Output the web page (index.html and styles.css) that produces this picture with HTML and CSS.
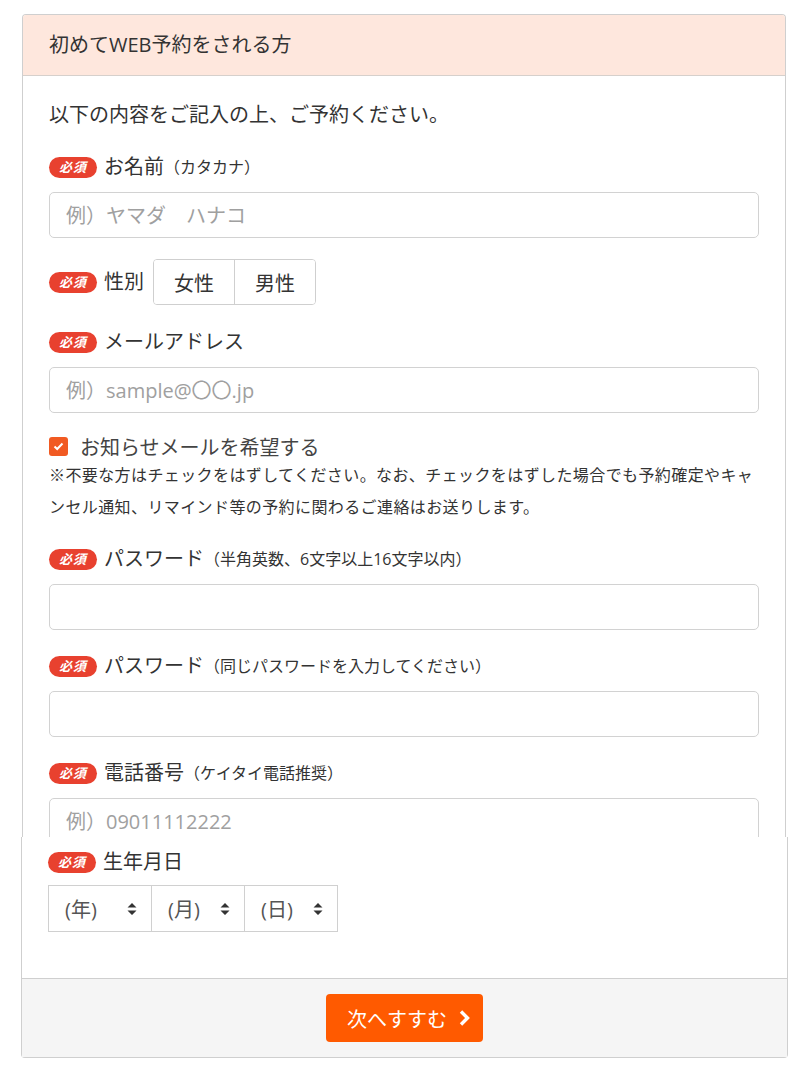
FILE: index.html
```html
<!DOCTYPE html>
<html lang="ja">
<head>
    <meta charset="UTF-8">
    <meta name="viewport" content="width=device-width, initial-scale=1.0">
    <title>初めてWEB予約をされる方</title>
    <link rel="stylesheet" href="styles.css">
</head>
<body>

<div class="page">
    <!-- Upper part of the form -->
    <section class="sheet sheet-top">
        <h2 class="sheet-title">初めてWEB予約をされる方</h2>
        <div class="sheet-body">
            <p class="lead">以下の内容をご記入の上、ご予約ください。</p>

            <div class="field">
                <div class="field-label"><span class="req">必須</span>お名前<small>（カタカナ）</small></div>
                <input class="text-input" type="text" placeholder="例）ヤマダ　ハナコ">
            </div>

            <div class="field field-inline">
                <div class="field-label"><span class="req">必須</span>性別</div>
                <div class="toggle">
                    <button type="button">女性</button>
                    <button type="button">男性</button>
                </div>
            </div>

            <div class="field field-mail">
                <div class="field-label"><span class="req">必須</span>メールアドレス</div>
                <input class="text-input" type="email" placeholder="例）sample@〇〇.jp">
            </div>

            <label class="check-row">
                <span class="check-box">
                    <svg width="11" height="9" viewBox="0 0 11 9"><path d="M1.5 4.5 L4.2 7 L9.5 1.5" fill="none" stroke="#fff" stroke-width="2"/></svg>
                </span>
                お知らせメールを希望する
            </label>
            <p class="note">※不要な方はチェックをはずしてください。なお、チェックをはずした場合でも予約確定やキャンセル通知、リマインド等の予約に関わるご連絡はお送りします。</p>

            <div class="field field-pw">
                <div class="field-label"><span class="req">必須</span>パスワード<small>（半角英数、6文字以上16文字以内）</small></div>
                <input class="text-input" type="password">
            </div>

            <div class="field field-pw">
                <div class="field-label"><span class="req">必須</span>パスワード<small>（同じパスワードを入力してください）</small></div>
                <input class="text-input" type="password">
            </div>

            <div class="field">
                <div class="field-label"><span class="req">必須</span>電話番号<small>（ケイタイ電話推奨）</small></div>
                <input class="text-input" type="tel" placeholder="例）09011112222">
            </div>
        </div>
    </section>

    <!-- Lower part of the form -->
    <section class="sheet sheet-bottom">
        <div class="sheet-body">
            <div class="field-label"><span class="req">必須</span>生年月日</div>
            <div class="date-row">
                <div class="date-select date-year">
                    <span>(年)</span>
                    <svg width="10" height="14" viewBox="0 0 10 14"><path d="M5 1 L9.5 5.5 H0.5 Z M0.5 8.5 H9.5 L5 13 Z" fill="#333"/></svg>
                </div>
                <div class="date-select">
                    <span>(月)</span>
                    <svg width="10" height="14" viewBox="0 0 10 14"><path d="M5 1 L9.5 5.5 H0.5 Z M0.5 8.5 H9.5 L5 13 Z" fill="#333"/></svg>
                </div>
                <div class="date-select">
                    <span>(日)</span>
                    <svg width="10" height="14" viewBox="0 0 10 14"><path d="M5 1 L9.5 5.5 H0.5 Z M0.5 8.5 H9.5 L5 13 Z" fill="#333"/></svg>
                </div>
            </div>
        </div>
        <div class="sheet-footer">
            <button type="submit" class="next-btn">次へすすむ
                <svg width="13" height="18" viewBox="0 0 13 18"><path d="M3 2.5 L9.5 9 L3 15.5" fill="none" stroke="#fff" stroke-width="3.4"/></svg>
            </button>
        </div>
    </section>
</div>

</body>
</html>
```

FILE: styles.css
```css
* {
    box-sizing: border-box;
}
body {
    margin: 0;
    padding: 0;
    background-color: #fff;
    color: #333;
    font-family: "Open Sans", "Noto Sans CJK JP", sans-serif;
}
.page {
    padding-top: 14px;
}
.sheet {
    border: 1px solid #cfcfcf;
    background: #fff;
}
.sheet-top {
    margin-left: 22px;
    width: 764px;
    height: 823px;
    border-bottom: none;
    border-radius: 4px 4px 0 0;
    overflow: hidden;
}
.sheet-bottom {
    margin-left: 21px;
    width: 767px;
    border-top: none;
    border-radius: 0 0 4px 4px;
}
.sheet-title {
    margin: 0;
    height: 61px;
    padding: 0 26px;
    line-height: 60px;
    font-size: 20px;
    font-weight: normal;
    background-color: #fee7dd;
    border-bottom: 1px solid #d6d0cc;
}
.sheet-body {
    padding: 23px 26px 0;
}
.sheet-bottom .sheet-body {
    padding: 9px 26px 46px;
}
.lead {
    margin: 0 0 20px;
    font-size: 20px;
    line-height: 32px;
}
.field {
    margin-bottom: 21px;
}
.field-pw {
    margin-bottom: 20px;
}
.field-mail {
    margin-bottom: 20px;
}
.field-label {
    display: flex;
    align-items: center;
    height: 32px;
    margin-bottom: 9px;
    font-size: 20px;
    line-height: 32px;
}
.field-label small {
    font-size: 16px;
}
.req {
    display: inline-block;
    width: 48px;
    height: 21px;
    margin-right: 7px;
    border-radius: 11px;
    background-color: #e8412f;
    color: #fff;
    font-size: 13px;
    font-weight: bold;
    font-style: italic;
    line-height: 21px;
    text-align: center;
    letter-spacing: 1px;
}
.text-input {
    display: block;
    width: 100%;
    height: 46px;
    padding: 0 16px;
    border: 1px solid #d2d2d2;
    border-radius: 5px;
    font-family: inherit;
    font-size: 20px;
    color: #333;
}
.text-input::placeholder {
    color: #a0a0a0;
}
.field-inline {
    display: flex;
    align-items: center;
    gap: 9px;
}
.field-inline .field-label {
    margin-bottom: 0;
}
.toggle {
    display: flex;
    height: 46px;
    border: 1px solid #cfcfcf;
    border-radius: 4px;
    overflow: hidden;
}
.toggle button {
    padding: 0 20px;
    border: none;
    background: #fff;
    font-family: inherit;
    font-size: 20px;
    color: #333;
    cursor: pointer;
}
.toggle button + button {
    border-left: 1px solid #cfcfcf;
}
.check-row {
    display: flex;
    align-items: center;
    height: 26px;
    font-size: 20px;
    color: #444;
}
.check-box {
    display: flex;
    align-items: center;
    justify-content: center;
    width: 19px;
    height: 19px;
    margin-right: 12px;
    border-radius: 3px;
    background-color: #f15a22;
}
.note {
    margin: 0 0 20px;
    font-size: 16px;
    line-height: 32px;
    letter-spacing: 0.4px;
}
.date-row {
    display: flex;
    margin-top: -2px;
}
.date-select {
    display: flex;
    align-items: center;
    justify-content: space-between;
    width: 93px;
    height: 47px;
    padding: 0 14px 0 16px;
    border: 1px solid #d0d0d0;
    font-size: 20px;
    color: #555;
}
.date-select + .date-select {
    border-left: none;
}
.date-select.date-year {
    width: 104px;
}
.sheet-footer {
    padding: 15px 0;
    text-align: center;
    background-color: #f5f5f5;
    border-top: 1px solid #cfcfcf;
}
.next-btn {
    display: inline-flex;
    align-items: center;
    gap: 11px;
    height: 48px;
    padding: 0 12px 0 21px;
    border: none;
    border-radius: 4px;
    background-color: #ff5a00;
    color: #fff;
    font-family: inherit;
    font-size: 20px;
    cursor: pointer;
}
```
